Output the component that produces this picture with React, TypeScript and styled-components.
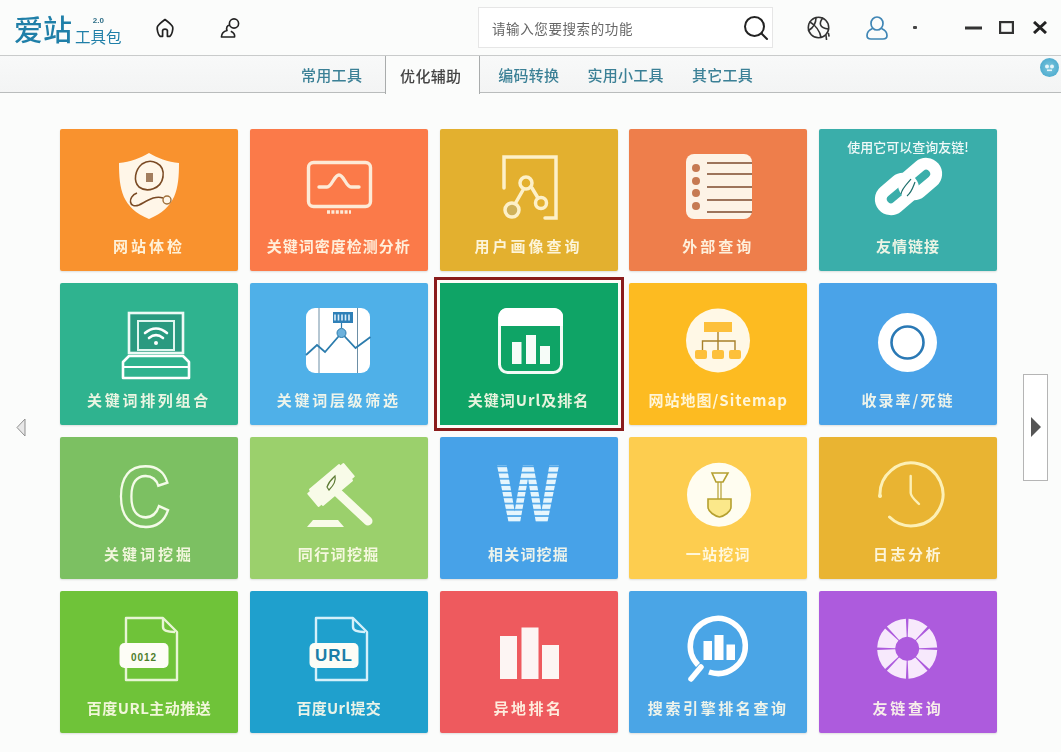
import React from "react";
import styled, { createGlobalStyle } from "styled-components";

const FONT = `"Noto Sans CJK SC", "Noto Sans", sans-serif`;

const GlobalStyle = createGlobalStyle`
  html, body {
    margin: 0;
    padding: 0;
    background: #fbfcfb;
    overflow: hidden;
  }
  * {
    box-sizing: border-box;
  }
`;

/* page */

const Page = styled.div`
  width: 1061px;
  height: 752px;
  display: flex;
  flex-direction: column;
  font-family: ${FONT};
  background: #fbfcfb;
`;

/* header */

const Header = styled.header`
  height: 55px;
  flex: none;
  display: flex;
  align-items: center;
  padding-left: 14px;
`;

const Logo = styled.div`
  width: 111px;
  flex: none;
  display: flex;
  align-items: flex-end;
  white-space: nowrap;
  color: #1f7fa8;
  filter: blur(0.4px);
`;

const LogoName = styled.span`
  font-size: 29px;
  line-height: 34px;
  font-weight: 500;
`;

const LogoSide = styled.span`
  display: flex;
  flex-direction: column;
  align-items: center;
  margin-left: 3px;
  margin-bottom: 1px;
`;

const LogoVersion = styled.span`
  font-family: "Liberation Sans", sans-serif;
  font-size: 8px;
  line-height: 9px;
  font-weight: 700;
  margin-bottom: 3px;
  color: #2f6f88;
`;

const LogoTool = styled.span`
  font-size: 15.5px;
  line-height: 16px;
`;

const Slot = styled.div<{ $left: number }>`
  margin-left: ${(p) => p.$left}px;
  display: flex;
  flex: none;
`;

const SearchBox = styled.div`
  margin-left: 238px;
  width: 295px;
  height: 41px;
  flex: none;
  display: flex;
  align-items: center;
  justify-content: space-between;
  padding: 0 3px 0 13px;
  background: #fff;
  border: 1px solid #e6e6e6;
`;

const SearchText = styled.span`
  font-size: 13.5px;
  letter-spacing: 0.6px;
  color: #666;
  filter: blur(0.4px);
`;

/* tabs */

const TabBar = styled.nav`
  height: 38px;
  flex: none;
  position: relative;
  display: flex;
  padding-left: 287px;
  background: linear-gradient(#f8f9f9, #f3f4f4);
  border-top: 1px solid #c9cbcb;
  border-bottom: 1px solid #b9bcbc;
`;

const Tab = styled.div<{ $active?: boolean }>`
  display: flex;
  align-items: center;
  justify-content: center;
  font-size: 15px;
  font-weight: 500;
  letter-spacing: 0.3px;
  filter: blur(0.35px);
  color: ${(p) => (p.$active ? "#444" : "#3b8096")};
  padding: ${(p) => (p.$active ? "0 4px 0 0" : "0 14px")};
  width: ${(p) => (p.$active ? "95px" : "auto")};
  margin: ${(p) => (p.$active ? "0 4px 0 9px" : "0")};
  height: ${(p) => (p.$active ? "38px" : "auto")};
  background: ${(p) => (p.$active ? "#fbfcfb" : "transparent")};
  border-left: ${(p) => (p.$active ? "1px solid #a9acac" : "none")};
  border-right: ${(p) => (p.$active ? "1px solid #a9acac" : "none")};
`;

const HelpBadge = styled.div`
  position: absolute;
  top: 2px;
  right: 2px;
  width: 19px;
  height: 19px;
  border-radius: 50%;
  display: flex;
  align-items: center;
  justify-content: center;
  background: radial-gradient(#7cc6dd, #3fa3ca);
  filter: blur(0.3px);
`;

/* main area */

const Main = styled.main`
  flex: 1;
  display: flex;
  padding-top: 36px;
  align-items: flex-start;
`;

const LeftRail = styled.div`
  width: 60px;
  flex: none;
  height: 596px;
  display: flex;
  align-items: center;
  padding-left: 16px;
`;

const RightRail = styled.div`
  flex: 1;
  height: 596px;
  display: flex;
  align-items: center;
  padding-left: 26px;
`;

const PagerButton = styled.div`
  width: 25px;
  height: 107px;
  display: flex;
  align-items: center;
  justify-content: center;
  background: #fff;
  border: 1px solid #b5b5b5;
`;

const Grid = styled.div`
  width: 937px;
  flex: none;
  display: grid;
  grid-template-columns: repeat(5, 1fr);
  grid-auto-rows: 142px;
  gap: 12px 11.75px;
`;

const Tile = styled.div<{ $bg: string; $selected?: boolean }>`
  position: relative;
  display: flex;
  flex-direction: column;
  align-items: center;
  padding-top: 24px;
  border-radius: ${(p) => (p.$selected ? "0" : "2px")};
  background: ${(p) => p.$bg};
  box-shadow: ${(p) =>
    p.$selected
      ? "0 0 0 3px #fdfdf8, 0 0 0 6px #8a1c1c"
      : "0 1px 2px rgba(0, 0, 0, 0.12)"};
`;

const Icon = styled.svg`
  width: 80px;
  height: 72px;
  flex: none;
  overflow: visible;
`;

const Label = styled.div<{ $track: number }>`
  margin-top: 11px;
  font-size: 15px;
  line-height: 20px;
  font-weight: 700;
  white-space: nowrap;
  letter-spacing: ${(p) => p.$track}px;
  color: rgba(255, 252, 235, 0.9);
  filter: blur(0.45px);
`;

const Caption = styled.div`
  position: absolute;
  top: 8px;
  left: 0;
  right: 0;
  text-align: center;
  font-size: 13px;
  line-height: 20px;
  font-weight: 500;
  white-space: nowrap;
  color: rgba(255, 255, 255, 0.92);
  filter: blur(0.4px);
`;

/* toolbar icons */

const HomeIcon = () => (
  <svg width="20" height="20" viewBox="0 0 20 20" fill="none" stroke="#222" strokeWidth="1.7" strokeLinejoin="round">
    <path d="M10 1.5C8 3 3 7 2.3 9C1.8 11 3 17 5 18.3H7.6V12.5C8 10.6 12 10.6 12.4 12.5V18.3H15C17 17 18.2 11 17.7 9C17 7 12 3 10 1.5Z" />
  </svg>
);

const PersonIcon = () => (
  <svg width="20" height="20" viewBox="0 0 20 20" fill="none" stroke="#222" strokeWidth="1.6" strokeLinejoin="round">
    <circle cx="14" cy="5.5" r="4.6" />
    <path d="M9.7 7C7 7.2 6 10 7 12.6C3.5 13.5 1.6 15.5 1.4 19H14.6C15 16.4 13.6 14.4 10.8 13.2" />
  </svg>
);

const SearchIcon = () => (
  <svg width="26" height="26" viewBox="0 0 26 26" fill="none" stroke="#222" strokeWidth="2" strokeLinecap="round">
    <circle cx="11.5" cy="11.5" r="9.5" />
    <path d="M18.5 18.5L24 24" />
  </svg>
);

const BallIcon = () => (
  <svg width="24" height="24" viewBox="0 0 24 24" fill="none" stroke="#333" strokeWidth="1.6" strokeLinecap="round">
    <circle cx="11.5" cy="11.5" r="10.2" />
    <path d="M3 6C8 9 13 15 14 21.4" />
    <path d="M9 1.6C9 7 6 12 1.6 14.5" />
    <path d="M15.5 2.2C12 7 12 12 21.5 13" />
    <path d="M19 19.5L19.5 23.5M21.5 17.5L22 20" />
  </svg>
);

const UserIcon = () => (
  <svg width="22" height="24" viewBox="0 0 22 24" fill="none" stroke="#3f86b5" strokeWidth="1.7">
    <ellipse cx="11" cy="7.5" rx="6" ry="6.5" />
    <path d="M6.5 12.5C3 14 1 16.5 1 19.5C1 22 2.5 23 5 23H17C19.5 23 21 22 21 19.5C21 16.5 19 14 15.5 12.5" />
  </svg>
);

const DotIcon = () => (
  <svg width="4" height="3" viewBox="0 0 4 3">
    <rect width="4" height="3" rx="1" fill="#444" />
  </svg>
);

const MinIcon = () => (
  <svg width="17" height="4" viewBox="0 0 17 4">
    <rect width="17" height="3" y="0.5" fill="#333" />
  </svg>
);

const MaxIcon = () => (
  <svg width="15" height="13" viewBox="0 0 15 13" fill="none" stroke="#333" strokeWidth="2.2">
    <rect x="1.1" y="1.1" width="12.8" height="10.8" />
  </svg>
);

const CloseIcon = () => (
  <svg width="14" height="13" viewBox="0 0 14 13" fill="none" stroke="#222" strokeWidth="3">
    <path d="M1 1L13 12M13 1L1 12" />
  </svg>
);

/* tile icons, all drawn in an 80x72 box */

const CREAM = "#fff6e8";

const ShieldIcon = () => (
  <Icon viewBox="0 0 80 72" fill="none">
    <path d="M40 0C48 5 59 9 70 10C70 36 67 55 40 66C13 55 10 36 10 10C21 9 32 5 40 0Z" fill={CREAM} />
    <path d="M33 11C42 5 56 10 54 24C52 36 38 40 30 34C24 28 26 17 33 11Z" stroke="#7a4a24" strokeWidth="1.6" />
    <path d="M28 40C18 44 20 56 30 52C38 48 46 42 54 45" stroke="#7a4a24" strokeWidth="1.6" />
    <circle cx="58" cy="47" r="4" stroke="#a0703a" strokeWidth="1.4" />
    <rect x="37" y="20" width="7" height="9" fill="#7a4a24" opacity="0.7" />
  </Icon>
);

const MonitorIcon = () => (
  <Icon viewBox="0 0 80 72" fill="none" stroke="#fdead6" strokeWidth="3.4" strokeLinecap="round">
    <rect x="9.5" y="9.5" width="62" height="44" rx="5" />
    <path d="M20 34H28C33 34 35 22 40 22C45 22 47 34 52 34H60" />
    <path d="M28 59H52" strokeDasharray="3 1.4" strokeLinecap="butt" strokeWidth="3.5" />
  </Icon>
);

const GraphIcon = () => (
  <Icon viewBox="0 0 80 72" fill="none" stroke="#fdf0c8" strokeWidth="3.5" strokeLinecap="round">
    <path d="M15 35V4H67V65H56" />
    <path d="M34 37L26 51M43 35L49 45" />
    <circle cx="37" cy="30" r="6" />
    <circle cx="23" cy="57" r="7" fill="#cfb15a" />
    <circle cx="52" cy="50" r="5.5" />
  </Icon>
);

const ListIcon = () => (
  <Icon viewBox="0 0 80 72" fill="none">
    <rect x="8" y="1" width="66" height="65" rx="8" fill="#fdf3e6" />
    {[10, 21, 34, 47, 59].map((y) => (
      <path key={y} d={`M29 ${y}H74`} stroke="#7c4a2c" strokeWidth="1.4" />
    ))}
    {[15, 28, 40, 53].map((y) => (
      <circle key={y} cx="18" cy={y} r="4" fill="#c67a52" />
    ))}
  </Icon>
);

const LinkIcon = () => (
  <Icon viewBox="0 0 80 72" fill="none">
    <g stroke="#fff" strokeWidth="12">
      <rect x="34" y="16" width="36" height="20" rx="10" transform="rotate(-40 52 26)" />
      <rect x="11" y="31" width="36" height="20" rx="10" transform="rotate(-40 29 41)" />
    </g>
    <path d="M33 41C34 35 40 30 43 26" stroke="#1f6f6c" strokeWidth="1.2" />
    <path d="M39 43C44 39 45 34 47 29" stroke="#1f6f6c" strokeWidth="1.2" />
  </Icon>
);

const LaptopIcon = () => (
  <Icon viewBox="0 0 80 72" fill="none" stroke="#fff" strokeWidth="2.6">
    <rect x="20" y="6" width="54" height="40" fill="#2a9a80" stroke="#eefaf6" />
    <rect x="29" y="14" width="36" height="29" stroke="#dff6ef" strokeWidth="2" />
    <path d="M36 26C43 20 51 20 58 26M40 31C45 27 49 27 54 31" strokeWidth="2.6" strokeLinecap="round" />
    <circle cx="47" cy="36" r="2" fill="#fff" stroke="none" />
    <path d="M20 49H74L80 55V71H14V55Z" strokeLinejoin="round" />
    <path d="M14 60H80" strokeWidth="2" />
  </Icon>
);

const TrendIcon = () => (
  <Icon viewBox="0 0 80 72" fill="none">
    <rect x="7" y="1" width="64" height="65" rx="9" fill="#fff" />
    <path d="M20 1V66M58.5 1V66" stroke="#6d8fa6" strokeWidth="1" />
    <path d="M7 48L18 38L26 45L42.5 26L56.5 41L71.5 30" stroke="#2c7cad" strokeWidth="1.8" />
    <circle cx="42.5" cy="26" r="4.5" fill="#6cb1dc" stroke="#2c7cad" />
    <path d="M42.5 16V21" stroke="#2c7cad" strokeWidth="1.2" />
    <rect x="34" y="5" width="20" height="11" fill="#2f80b8" />
    <path d="M36 7.5V13.5M39.5 7.5V13.5M43 7.5V13.5M46.5 7.5V13.5M50 7.5V13.5" stroke="#dbeefa" strokeWidth="1.6" />
  </Icon>
);

const SheetIcon = () => (
  <Icon viewBox="0 0 80 72" fill="none">
    <rect x="10.5" y="2.5" width="62" height="63" rx="8" stroke="#f3fbf6" strokeWidth="3" />
    <path d="M10 19V9C10 5 13 1 18 1H65C70 1 74 5 74 9V19Z" fill="#fff" />
    <rect x="23" y="35" width="9.5" height="22" fill="#f6fcf8" />
    <rect x="37" y="28" width="10" height="29" fill="#f6fcf8" />
    <rect x="51" y="39" width="10" height="18" fill="#f6fcf8" />
  </Icon>
);

const OrgIcon = () => (
  <Icon viewBox="0 0 80 72" fill="none">
    <circle cx="40" cy="33.5" r="32" fill="#fff8e6" />
    <rect x="26" y="15" width="28" height="10" fill="#fdc03b" />
    <path d="M40 25V34M24.5 43V34H57V43M40 34V43" stroke="#a8802a" strokeWidth="1.4" />
    <rect x="17" y="43" width="12" height="9" rx="2" fill="#fdc03b" />
    <rect x="34" y="43" width="12" height="9" rx="2" fill="#fdc03b" />
    <rect x="51" y="43" width="12" height="9" rx="2" fill="#fdc03b" />
  </Icon>
);

const RingIcon = () => (
  <Icon viewBox="0 0 80 72" fill="none">
    <circle cx="39.5" cy="35.5" r="29.5" fill="#fff" />
    <circle cx="39.5" cy="35.5" r="16" stroke="#2a79b5" strokeWidth="2.6" />
  </Icon>
);

const CIcon = () => (
  <Icon viewBox="0 0 80 72">
    <text x="9" y="65" fontFamily="'Liberation Sans', sans-serif" fontWeight="700" fontSize="86" textLength="52" lengthAdjust="spacingAndGlyphs" fill="none" stroke="#f4fbe8" strokeWidth="2.6">
      C
    </text>
  </Icon>
);

const GavelIcon = () => (
  <Icon viewBox="0 0 80 72" fill="none">
    <path d="M38 31L69 60" stroke="#f8fbe8" strokeWidth="9" strokeLinecap="round" />
    <g transform="rotate(-40 32 24)">
      <rect x="12" y="13" width="40" height="22" rx="1" fill="#f8fbe8" />
      <rect x="8" y="15" width="7" height="18" rx="1" fill="#f8fbe8" />
      <rect x="49" y="15" width="7" height="18" rx="1" fill="#f8fbe8" />
    </g>
    <path d="M28 26C30 20 34 17 36 15C37 19 35 24 30 29Z" stroke="#5d7a34" strokeWidth="1.2" />
    <path d="M14 59H39L45 66H8Z" fill="#f8fbe8" />
  </Icon>
);

const WIcon = () => (
  <Icon viewBox="0 0 80 72">
    <defs>
      <pattern id="wStripes" width="80" height="6.2" patternUnits="userSpaceOnUse">
        <rect width="80" height="4.6" fill="#e6f6fd" />
      </pattern>
    </defs>
    <text x="8" y="62" fontFamily="'Liberation Sans', sans-serif" fontWeight="700" fontSize="84" textLength="62" lengthAdjust="spacingAndGlyphs" fill="url(#wStripes)">
      W
    </text>
  </Icon>
);

const ShovelIcon = () => (
  <Icon viewBox="0 0 80 72" fill="none">
    <circle cx="41" cy="33.7" r="32" fill="#fffdf0" />
    <path d="M34 12H50L45 21H38Z" stroke="#b5a030" strokeWidth="1.6" />
    <path d="M40 21V39M43 21V39" stroke="#b5a030" strokeWidth="1.2" />
    <path d="M30 38H53V46C53 51 46 55 41.5 56C37 55 30 51 30 46Z" fill="#fbe88a" stroke="#b5a030" strokeWidth="1.6" />
  </Icon>
);

const ClockIcon = () => (
  <Icon viewBox="0 0 80 72" fill="none" stroke="#fdf0b5" strokeWidth="3" strokeLinecap="round">
    <path d="M12 35A31.5 31.5 0 1 1 21.5 56" />
    <circle cx="12" cy="35" r="2" fill="#fdf0b5" stroke="none" />
    <path d="M42.7 15V32C43 36 47 39 51 43" strokeWidth="2.4" />
  </Icon>
);

const Badge = styled.text<{ $fill: string; $size: number }>`
  font-family: "Liberation Sans", sans-serif;
  font-weight: 700;
  font-size: ${(p) => p.$size}px;
  letter-spacing: 1px;
  fill: ${(p) => p.$fill};
`;

const FileIcon = ({ text, color, size, stroke }: { text: string; color: string; size: number; stroke: string }) => (
  <Icon viewBox="0 0 80 72" fill="none">
    <path d="M17 3H54L68 17V65H17Z" stroke={stroke} strokeWidth="2.4" strokeLinejoin="round" />
    <path d="M54 4V12C54 15 58 17 66 17" stroke={stroke} strokeWidth="2.4" />
    <rect x="10.5" y="28" width="49" height="25" rx="5" fill="#fdfdf6" />
    <Badge x="35" y="46" textAnchor="middle" $fill={color} $size={size}>
      {text}
    </Badge>
  </Icon>
);

const BarsIcon = () => (
  <Icon viewBox="0 0 80 72" fill="#fdf5f3">
    <rect x="11" y="21" width="17" height="43" />
    <rect x="32.5" y="12.5" width="17" height="51.5" />
    <rect x="53" y="30" width="17" height="34" />
  </Icon>
);

const MagnifierIcon = () => (
  <Icon viewBox="0 0 80 72" fill="none" stroke="#fff">
    <path d="M20 50A27.5 27.5 0 1 1 31 57" strokeWidth="5.5" />
    <path d="M13 64L23 52" strokeWidth="5.5" strokeLinecap="round" />
    <g fill="#fff" stroke="none">
      <rect x="25.5" y="26" width="8.5" height="19" />
      <rect x="36.5" y="20" width="9" height="25" />
      <rect x="48.5" y="29.5" width="8.5" height="15.5" />
    </g>
  </Icon>
);

const wedges = Array.from({ length: 8 }, (_, i) => {
  const cx = 39.2;
  const cy = 33.7;
  const a = ((i * 45 + 2.5) * Math.PI) / 180;
  const b = (((i + 1) * 45 - 2.5) * Math.PI) / 180;
  const pt = (r: number, t: number) => `${(cx + r * Math.cos(t)).toFixed(1)} ${(cy + r * Math.sin(t)).toFixed(1)}`;
  return `M${pt(12, a)}L${pt(30, a)}A30 30 0 0 1 ${pt(30, b)}L${pt(12, b)}A12 12 0 0 0 ${pt(12, a)}Z`;
});

const WheelIcon = () => (
  <Icon viewBox="0 0 80 72" fill="#f7e9fc">
    {wedges.map((d) => (
      <path key={d} d={d} />
    ))}
  </Icon>
);

/* data */

type TileData = {
  label: string;
  bg: string;
  track: number;
  icon: React.ReactNode;
  caption?: string;
  selected?: boolean;
};

const tiles: TileData[] = [
  { label: "网站体检", bg: "#f9922e", track: 3, icon: <ShieldIcon /> },
  { label: "关键词密度检测分析", bg: "#fb7a49", track: 1, icon: <MonitorIcon /> },
  { label: "用户画像查询", bg: "#e3b02f", track: 3, icon: <GraphIcon /> },
  { label: "外部查询", bg: "#ee7e4b", track: 3, icon: <ListIcon /> },
  { label: "友情链接", bg: "#3aaeaa", track: 1, icon: <LinkIcon />, caption: "使用它可以查询友链!" },
  { label: "关键词排列组合", bg: "#2fb38f", track: 2.7, icon: <LaptopIcon /> },
  { label: "关键词层级筛选", bg: "#4fb0e8", track: 2.7, icon: <TrendIcon /> },
  { label: "关键词Url及排名", bg: "#0fa466", track: 1, icon: <SheetIcon />, selected: true },
  { label: "网站地图/Sitemap", bg: "#fdbb21", track: 1, icon: <OrgIcon /> },
  { label: "收录率/死链", bg: "#4aa3e8", track: 2, icon: <RingIcon /> },
  { label: "关键词挖掘", bg: "#7cc062", track: 3, icon: <CIcon /> },
  { label: "同行词挖掘", bg: "#9bd06c", track: 1.4, icon: <GavelIcon /> },
  { label: "相关词挖掘", bg: "#47a2e8", track: 1.2, icon: <WIcon /> },
  { label: "一站挖词", bg: "#fdcd4f", track: 1.2, icon: <ShovelIcon /> },
  { label: "日志分析", bg: "#e9b432", track: 2.5, icon: <ClockIcon /> },
  {
    label: "百度URL主动推送",
    bg: "#6fc339",
    track: 0.5,
    icon: <FileIcon text="0012" color="#4d7d2c" size={10} stroke="#e8f5d5" />,
  },
  {
    label: "百度Url提交",
    bg: "#1fa0cd",
    track: 0.3,
    icon: <FileIcon text="URL" color="#1b7ea8" size={17} stroke="#d5f0fa" />,
  },
  { label: "异地排名", bg: "#ee5a5e", track: 2.5, icon: <BarsIcon /> },
  { label: "搜索引擎排名查询", bg: "#4aa5e6", track: 2.6, icon: <MagnifierIcon /> },
  { label: "友链查询", bg: "#ad5bdd", track: 2.8, icon: <WheelIcon /> },
];

export default function App() {
  return (
    <Page>
      <GlobalStyle />
      <Header>
        <Logo>
          <LogoName>爱站</LogoName>
          <LogoSide>
            <LogoVersion>2.0</LogoVersion>
            <LogoTool>工具包</LogoTool>
          </LogoSide>
        </Logo>
        <Slot $left={30}>
          <HomeIcon />
        </Slot>
        <Slot $left={45}>
          <PersonIcon />
        </Slot>
        <SearchBox>
          <SearchText>请输入您要搜索的功能</SearchText>
          <SearchIcon />
        </SearchBox>
        <Slot $left={34}>
          <BallIcon />
        </Slot>
        <Slot $left={35}>
          <UserIcon />
        </Slot>
        <Slot $left={25}>
          <DotIcon />
        </Slot>
        <Slot $left={48}>
          <MinIcon />
        </Slot>
        <Slot $left={17}>
          <MaxIcon />
        </Slot>
        <Slot $left={19}>
          <CloseIcon />
        </Slot>
      </Header>

      <TabBar>
        <Tab>常用工具</Tab>
        <Tab $active>优化辅助</Tab>
        <Tab>编码转换</Tab>
        <Tab>实用小工具</Tab>
        <Tab>其它工具</Tab>
        <HelpBadge>
          <svg width="11" height="9" viewBox="0 0 11 9" fill="#e6f5fa">
            <circle cx="3" cy="3.5" r="2" />
            <circle cx="8" cy="3.5" r="2" />
            <rect x="3" y="6.5" width="5" height="1.6" />
          </svg>
        </HelpBadge>
      </TabBar>

      <Main>
        <LeftRail>
          <svg width="10" height="19" viewBox="0 0 10 19" fill="#e8e8e8" stroke="#8f8f8f" strokeWidth="1">
            <path d="M9 1V18L1 9.5Z" />
          </svg>
        </LeftRail>
        <Grid>
          {tiles.map((tile) => (
            <Tile key={tile.label} $bg={tile.bg} $selected={tile.selected}>
              {tile.caption && <Caption>{tile.caption}</Caption>}
              {tile.icon}
              <Label $track={tile.track}>{tile.label}</Label>
            </Tile>
          ))}
        </Grid>
        <RightRail>
          <PagerButton>
            <svg width="10" height="20" viewBox="0 0 10 20" fill="#555">
              <path d="M0 0L10 10L0 20Z" />
            </svg>
          </PagerButton>
        </RightRail>
      </Main>
    </Page>
  );
}
